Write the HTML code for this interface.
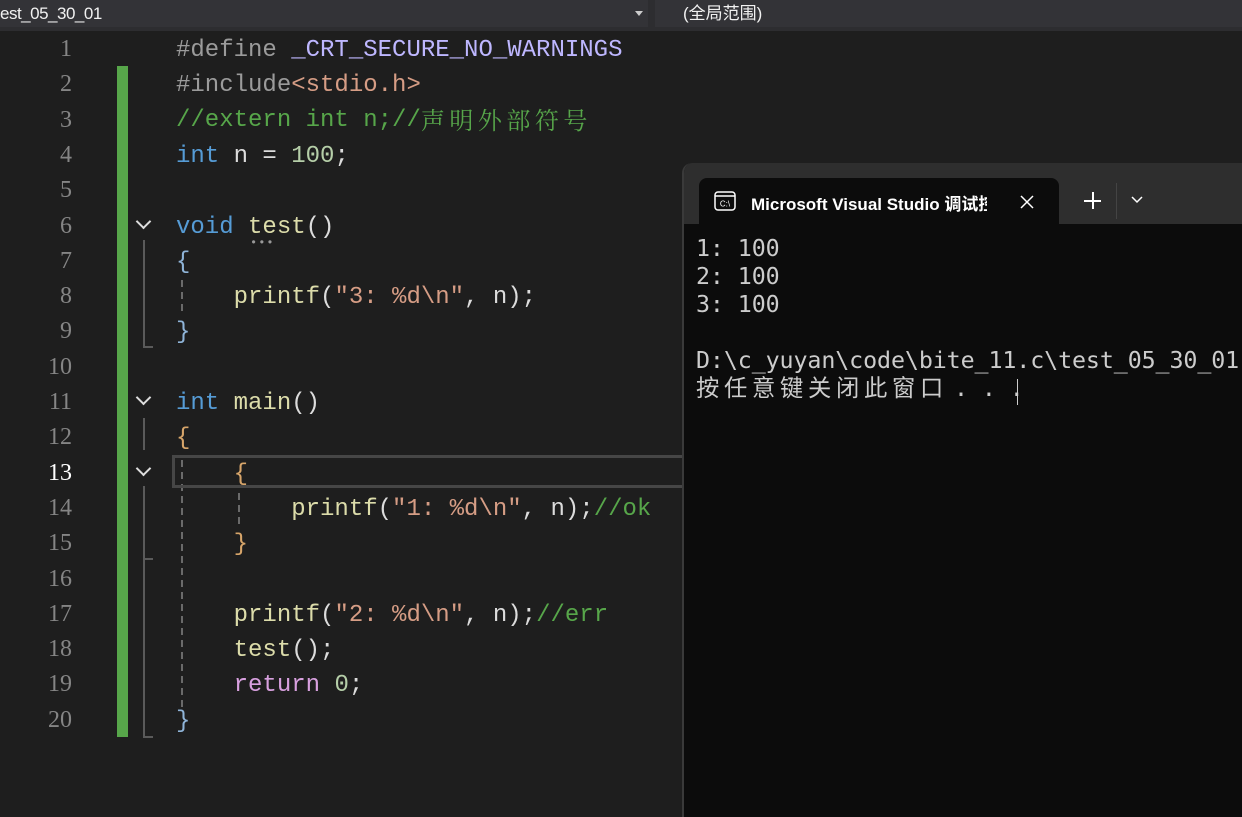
<!DOCTYPE html>
<html><head><meta charset="utf-8"><style>
*{margin:0;padding:0;box-sizing:border-box}
body{width:1242px;height:817px;overflow:hidden;background:#1e1e1e;position:relative;font-family:"Liberation Mono","Noto Sans CJK SC",monospace}
.top{position:absolute;left:0;top:0;width:1242px;height:31px;background:#2d2d30}
.f1{position:absolute;left:0;top:0;width:648px;height:27px;background:#333337;color:#f1f1f1;font:17px "Liberation Sans",sans-serif;line-height:27px;padding-left:0;letter-spacing:-0.5px}
.f2{position:absolute;left:655px;top:0;width:587px;height:27px;background:#333337;color:#f1f1f1;font:17px "Liberation Sans","Noto Sans CJK SC",sans-serif;line-height:27px;padding-left:28px}
.arr{position:absolute;left:635px;top:11px;border-left:4px solid transparent;border-right:4px solid transparent;border-top:5px solid #ccc}
.ln{position:absolute;left:0;width:72px;text-align:right;color:#858585;font:24px "Liberation Serif",serif;height:35px;line-height:35px}
.cl{position:absolute;left:176px;height:35px;line-height:35px;font-size:24px;white-space:pre;color:#dcdcdc;letter-spacing:0}
.cj{font-family:"Noto Serif CJK SC","Noto Sans CJK SC",sans-serif;letter-spacing:4.5px;font-size:24px;line-height:1;vertical-align:top;position:relative;top:4px}
.k{color:#569cd6}.fn{color:#dcdcaa}.s{color:#d69d85}.c{color:#57a64a}.n{color:#b5cea8}.m{color:#beb7ff}.p{color:#9b9b9b}.r{color:#d8a0df}
.green{position:absolute;left:117px;top:66px;width:11px;height:671px;background:#57a64a}
.chev{position:absolute;width:11px;height:11px;border-right:2px solid #ddd;border-bottom:2px solid #ddd;transform:rotate(45deg)}
.vl{position:absolute;width:2px;background:#5a5a5a}
.hl{position:absolute;height:2px;background:#5a5a5a;width:10px}
.dl{position:absolute;width:2px;background:repeating-linear-gradient(#6a6a6a 0 7px,transparent 7px 12px)}
.cur{position:absolute;left:172px;top:455px;width:520px;height:33px;border:3px solid #464646;border-right:none}
.term{position:absolute;left:682px;top:163px;width:560px;height:654px;background:#0c0c0c;border-left:2px solid #3a3a3a;border-top-left-radius:10px;overflow:hidden}
.tabbar{position:absolute;left:0;top:0;width:560px;height:61px;background:#2e2e2e}
.tab{position:absolute;left:15px;top:15px;width:360px;height:50px;background:#0c0c0c;border-radius:8px 8px 0 0}
.ttl{position:absolute;left:52px;top:12px;color:#fff;font:17px "Liberation Sans","Noto Sans CJK SC",sans-serif;font-weight:bold;white-space:nowrap;width:236px;overflow:hidden}
.out{position:absolute;left:12px;top:72px;color:#cccccc;font-size:23.3px;line-height:28px;white-space:pre;font-family:"DejaVu Sans Mono","Noto Sans CJK SC",monospace;letter-spacing:-0.1px}
</style></head><body>
<div class="top"><div class="f1">est_05_30_01</div><div class="arr"></div><div class="f2">(全局范围)</div></div>

<div class="green"></div>
<div class="ln" style="top:32px">1</div>
<div class="ln" style="top:67px">2</div>
<div class="ln" style="top:103px">3</div>
<div class="ln" style="top:138px">4</div>
<div class="ln" style="top:173px">5</div>
<div class="ln" style="top:209px">6</div>
<div class="ln" style="top:244px">7</div>
<div class="ln" style="top:279px">8</div>
<div class="ln" style="top:314px">9</div>
<div class="ln" style="top:350px">10</div>
<div class="ln" style="top:385px">11</div>
<div class="ln" style="top:420px">12</div>
<div class="ln" style="top:456px;color:#fff">13</div>
<div class="ln" style="top:491px">14</div>
<div class="ln" style="top:526px">15</div>
<div class="ln" style="top:562px">16</div>
<div class="ln" style="top:597px">17</div>
<div class="ln" style="top:632px">18</div>
<div class="ln" style="top:667px">19</div>
<div class="ln" style="top:703px">20</div>

<div class="chev" style="left:138px;top:216px"></div>
<div class="chev" style="left:138px;top:392px"></div>
<div class="chev" style="left:138px;top:463px"></div>
<div class="vl" style="left:143px;top:240px;height:108px"></div><div class="hl" style="left:143px;top:346px"></div>
<div class="vl" style="left:143px;top:418px;height:32px"></div>
<div class="vl" style="left:143px;top:486px;height:252px"></div><div class="hl" style="left:143px;top:558px"></div><div class="hl" style="left:143px;top:736px"></div>
<div class="dl" style="left:181px;top:280px;height:36px"></div>
<div class="dl" style="left:181px;top:460px;height:247px"></div>
<div class="dl" style="left:238px;top:493px;height:36px"></div>
<div class="cur"></div>
<div style="position:absolute;left:250px;top:236px;color:#999;font-size:12px;letter-spacing:1px">•••</div>

<div class="cl" style="top:33px"><span class="p">#define </span><span class="m">_CRT_SECURE_NO_WARNINGS</span></div>
<div class="cl" style="top:68px"><span class="p">#include</span><span class="s">&lt;stdio.h&gt;</span></div>
<div class="cl" style="top:103px"><span class="c">//extern int n;//<span class="cj">声明外部符号</span></span></div>
<div class="cl" style="top:139px"><span class="k">int</span> n = <span class="n">100</span>;</div>
<div class="cl" style="top:210px"><span class="k">void</span> <span class="fn">test</span>()</div>
<div class="cl" style="top:245px;color:#8fb4d8">{</div>
<div class="cl" style="top:280px">    <span class="fn">printf</span>(<span class="s">"3: %d\n"</span>, n);</div>
<div class="cl" style="top:315px;color:#8fb4d8">}</div>
<div class="cl" style="top:386px"><span class="k">int</span> <span class="fn">main</span>()</div>
<div class="cl" style="top:421px;color:#d7a56a">{</div>
<div class="cl" style="top:457px;color:#d7a56a">    {</div>
<div class="cl" style="top:492px">        <span class="fn">printf</span>(<span class="s">"1: %d\n"</span>, n);<span class="c">//ok</span></div>
<div class="cl" style="top:527px;color:#d7a56a">    }</div>
<div class="cl" style="top:598px">    <span class="fn">printf</span>(<span class="s">"2: %d\n"</span>, n);<span class="c">//err</span></div>
<div class="cl" style="top:633px">    <span class="fn">test</span>();</div>
<div class="cl" style="top:668px">    <span class="r">return</span> <span class="n">0</span>;</div>
<div class="cl" style="top:704px;color:#8fb4d8">}</div>

<div class="term">
 <div class="tabbar"></div>
 <div class="tab">
  <svg style="position:absolute;left:15px;top:13px" width="22" height="20" viewBox="0 0 22 20"><rect x="1" y="1" width="20" height="18" rx="3" fill="none" stroke="#fff" stroke-width="1.5"/><line x1="1" y1="5" x2="21" y2="5" stroke="#fff" stroke-width="1.5"/><text x="11" y="15.5" font-size="8" fill="#fff" text-anchor="middle" font-family="Liberation Sans">C:\</text></svg>
  <div class="ttl">Microsoft Visual Studio 调试控</div>
  <svg style="position:absolute;left:321px;top:17px" width="14" height="14" viewBox="0 0 14 14"><path d="M1 1L13 13M13 1L1 13" stroke="#fff" stroke-width="1.5"/></svg>
 </div>
 <div style="position:absolute;left:400px;top:37px;width:17px;height:1.5px;background:#fff"></div>
 <div style="position:absolute;left:408px;top:29px;width:1.5px;height:17px;background:#fff"></div>
 <div style="position:absolute;left:432px;top:20px;width:1px;height:36px;background:#444"></div>
 <svg style="position:absolute;left:447px;top:33px" width="12" height="8" viewBox="0 0 12 8"><path d="M1 1L6 6L11 1" fill="none" stroke="#fff" stroke-width="1.5"/></svg>
 <div class="out">1: 100
2: 100
3: 100

D:\c_yuyan\code\bite_11.c\test_05_30_01
<span style="letter-spacing:4.7px">按任意键关闭此窗口</span><span style="margin-left:6px">. . .</span></div>
 <div style="position:absolute;left:333px;top:216px;width:1px;height:26px;background:#ccc"></div>
</div>
</body></html>
